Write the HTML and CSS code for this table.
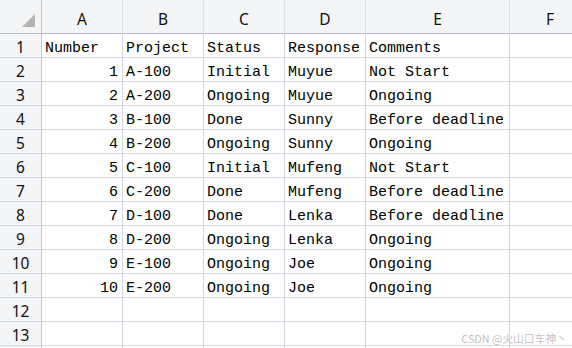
FILE: index.html
```html
<!DOCTYPE html>
<html>
<head>
<meta charset="utf-8">
<link rel="stylesheet" href="styles.css">
</head>
<body>
<div class="sheet">
  <div class="grid">
    <div class="ch corner"><span class="tri"></span></div>
    <div class="ch">A</div><div class="ch">B</div><div class="ch">C</div><div class="ch">D</div><div class="ch">E</div><div class="ch">F</div>

    <div class="rh">1</div><div class="c">Number</div><div class="c">Project</div><div class="c">Status</div><div class="c">Response</div><div class="c">Comments</div><div class="c"></div>
    <div class="rh">2</div><div class="c n">1</div><div class="c">A-100</div><div class="c">Initial</div><div class="c">Muyue</div><div class="c">Not Start</div><div class="c"></div>
    <div class="rh">3</div><div class="c n">2</div><div class="c">A-200</div><div class="c">Ongoing</div><div class="c">Muyue</div><div class="c">Ongoing</div><div class="c"></div>
    <div class="rh">4</div><div class="c n">3</div><div class="c">B-100</div><div class="c">Done</div><div class="c">Sunny</div><div class="c">Before deadline</div><div class="c"></div>
    <div class="rh">5</div><div class="c n">4</div><div class="c">B-200</div><div class="c">Ongoing</div><div class="c">Sunny</div><div class="c">Ongoing</div><div class="c"></div>
    <div class="rh">6</div><div class="c n">5</div><div class="c">C-100</div><div class="c">Initial</div><div class="c">Mufeng</div><div class="c">Not Start</div><div class="c"></div>
    <div class="rh">7</div><div class="c n">6</div><div class="c">C-200</div><div class="c">Done</div><div class="c">Mufeng</div><div class="c">Before deadline</div><div class="c"></div>
    <div class="rh">8</div><div class="c n">7</div><div class="c">D-100</div><div class="c">Done</div><div class="c">Lenka</div><div class="c">Before deadline</div><div class="c"></div>
    <div class="rh">9</div><div class="c n">8</div><div class="c">D-200</div><div class="c">Ongoing</div><div class="c">Lenka</div><div class="c">Ongoing</div><div class="c"></div>
    <div class="rh">10</div><div class="c n">9</div><div class="c">E-100</div><div class="c">Ongoing</div><div class="c">Joe</div><div class="c">Ongoing</div><div class="c"></div>
    <div class="rh">11</div><div class="c n">10</div><div class="c">E-200</div><div class="c">Ongoing</div><div class="c">Joe</div><div class="c">Ongoing</div><div class="c"></div>
    <div class="rh">12</div><div class="c"></div><div class="c"></div><div class="c"></div><div class="c"></div><div class="c"></div><div class="c"></div>
    <div class="rh">13</div><div class="c"></div><div class="c"></div><div class="c"></div><div class="c"></div><div class="c"></div><div class="c"></div>
    <div class="rh"></div><div class="c"></div><div class="c"></div><div class="c"></div><div class="c"></div><div class="c"></div><div class="c"></div>
  </div>
  <div class="watermark">CSDN @火山口车神丶</div>
</div>
</body>
</html>
```
FILE: styles.css
```css
html, body {
  margin: 0;
  padding: 0;
  background: #ffffff;
  overflow: hidden;
}
.sheet {
  position: relative;
  width: 572px;
  height: 348px;
  overflow: hidden;
}
.grid {
  display: grid;
  grid-template-columns: 42px 81px 81px 81px 81px 144px 81px;
  grid-template-rows: 34px;
  grid-auto-rows: 24px;
}
.ch {
  box-sizing: border-box;
  background: #f4f5f7;
  border-right: 1px solid #dfe1e6;
  border-bottom: 1px solid #b8bcc8;
  font-family: "Noto Sans", "Liberation Sans", sans-serif;
  font-size: 15.5px;
  color: #111;
  display: flex;
  align-items: flex-end;
  justify-content: center;
  padding-bottom: 3px;
}
.corner {
  position: relative;
  border-right-color: #c3c7d1;
}
.tri {
  position: absolute;
  left: 22px;
  top: 14px;
  width: 13px;
  height: 13px;
  background: #b4b4b4;
  clip-path: polygon(100% 0, 100% 100%, 0 100%);
}
.rh {
  box-sizing: border-box;
  background: #f4f5f7;
  border-right: 1px solid #c3c7d1;
  border-bottom: 1px solid #d6d9df;
  font-family: "Noto Sans", "Liberation Sans", sans-serif;
  font-size: 15.5px;
  color: #111;
  display: flex;
  align-items: flex-end;
  justify-content: center;
  line-height: 20px;
  padding-bottom: 0;
}
.c {
  box-sizing: border-box;
  border-right: 1px solid #d2d6df;
  border-bottom: 1px solid #d2d6df;
  font-family: "Liberation Mono", "DejaVu Sans Mono", monospace;
  font-size: 15px;
  color: #000;
  display: flex;
  align-items: flex-end;
  line-height: 17px;
  padding: 0 3px 0 3px;
  white-space: nowrap;
  overflow: hidden;
}
.n {
  justify-content: flex-end;
  padding-right: 4px;
}
.watermark {
  position: absolute;
  right: 5px;
  bottom: 3px;
  font-family: "Noto Sans CJK SC", "Noto Sans", sans-serif;
  font-size: 10.8px;
  color: #c4c4c4;
  line-height: 14px;
}
```
